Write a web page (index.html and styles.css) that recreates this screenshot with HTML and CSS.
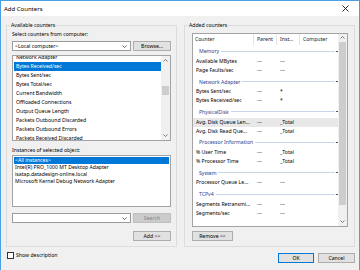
FILE: index.html
```html
<!DOCTYPE html>
<html lang="en">
<head>
    <meta charset="UTF-8">
    <meta name="viewport" content="width=device-width, initial-scale=1.0">
    <title>Add Counters</title>
    <link rel="stylesheet" href="styles.css">
</head>
<body>
    <div class="window">
        <div class="titlebar">
            <span class="title">Add Counters</span>
            <svg class="close" width="7" height="7" viewBox="0 0 7 7">
                <path d="M0.5 0.5L6.5 6.5M6.5 0.5L0.5 6.5" stroke="#111" stroke-width="0.9" fill="none"/>
            </svg>
        </div>

        <div class="dialog">
            <div class="panes">
                <!-- left side -->
                <div class="group group-left">
                    <div class="group-title">Available counters</div>
                    <div class="label">Select counters from computer:</div>
                    <div class="row row-top">
                        <div class="combo">
                            <span>&lt;Local computer&gt;</span>
                            <svg class="chevron" width="5" height="3" viewBox="0 0 5 3"><path d="M0.5 0.5L2.5 2.5L4.5 0.5" stroke="#444" stroke-width="0.8" fill="none"/></svg>
                        </div>
                        <button type="button" class="btn btn-side">Browse...</button>
                    </div>

                    <div class="listbox counters">
                        <div class="items">
                            <div class="item first">Network Adapter</div>
                            <div class="item selected">Bytes Received/sec</div>
                            <div class="item">Bytes Sent/sec</div>
                            <div class="item">Bytes Total/sec</div>
                            <div class="item">Current Bandwidth</div>
                            <div class="item">Offloaded Connections</div>
                            <div class="item">Output Queue Length</div>
                            <div class="item">Packets Outbound Discarded</div>
                            <div class="item">Packets Outbound Errors</div>
                            <div class="item">Packets Received Discarded</div>
                        </div>
                        <div class="scrollbar">
                            <div class="arrow"><svg width="5" height="3" viewBox="0 0 5 3"><path d="M0.5 2.5L2.5 0.5L4.5 2.5" stroke="#606060" stroke-width="0.8" fill="none"/></svg></div>
                            <div class="track"><div class="thumb thumb-small"></div></div>
                            <div class="arrow"><svg width="5" height="3" viewBox="0 0 5 3"><path d="M0.5 0.5L2.5 2.5L4.5 0.5" stroke="#606060" stroke-width="0.8" fill="none"/></svg></div>
                        </div>
                    </div>

                    <div class="label label-instances">Instances of selected object:</div>
                    <div class="listbox instances">
                        <div class="items">
                            <div class="inst selected">&lt;All instances&gt;</div>
                            <div class="inst">Intel(R) PRO_1000 MT Desktop Adapter</div>
                            <div class="inst">isatap.datadesign-online.local</div>
                            <div class="inst">Microsoft Kernel Debug Network Adapter</div>
                        </div>
                    </div>

                    <div class="row row-search">
                        <div class="combo">
                            <span></span>
                            <svg class="chevron" width="5" height="3" viewBox="0 0 5 3"><path d="M0.5 0.5L2.5 2.5L4.5 0.5" stroke="#444" stroke-width="0.8" fill="none"/></svg>
                        </div>
                        <button type="button" class="btn btn-side" disabled>Search</button>
                    </div>

                    <div class="row row-add">
                        <button type="button" class="btn btn-side">Add &gt;&gt;</button>
                    </div>
                </div>

                <!-- right side -->
                <div class="group group-right">
                    <div class="group-title">Added counters</div>
                    <div class="table">
                        <div class="table-main">
                            <div class="thead">
                                <div class="th">Counter</div>
                                <div class="th">Parent</div>
                                <div class="th">Inst...</div>
                                <div class="th th-last">Computer</div>
                            </div>

                            <div class="grouprow"><span>Memory</span><i class="rule"></i><i class="mark"></i></div>
                            <div class="tr"><span>Available MBytes</span><span>---</span><span>---</span><span></span></div>
                            <div class="tr"><span>Page Faults/sec</span><span>---</span><span>---</span><span></span></div>

                            <div class="grouprow"><span>Network Adapter</span><i class="rule"></i><i class="mark"></i></div>
                            <div class="tr"><span>Bytes Sent/sec</span><span>---</span><span>*</span><span></span></div>
                            <div class="tr"><span>Bytes Received/sec</span><span>---</span><span>*</span><span></span></div>

                            <div class="grouprow"><span>PhysicalDisk</span><i class="rule"></i><i class="mark"></i></div>
                            <div class="tr hot"><span>Avg. Disk Queue Len...</span><span>---</span><span>_Total</span><span></span></div>
                            <div class="tr"><span>Avg. Disk Read Que...</span><span>---</span><span>_Total</span><span></span></div>

                            <div class="grouprow"><span>Processor Information</span><i class="rule"></i><i class="mark"></i></div>
                            <div class="tr"><span>% User Time</span><span>---</span><span>_Total</span><span></span></div>
                            <div class="tr"><span>% Processor Time</span><span>---</span><span>_Total</span><span></span></div>

                            <div class="grouprow"><span>System</span><i class="rule"></i><i class="mark"></i></div>
                            <div class="tr"><span>Processor Queue Le...</span><span>---</span><span>---</span><span></span></div>

                            <div class="grouprow"><span>TCPv4</span><i class="rule"></i><i class="mark"></i></div>
                            <div class="tr"><span>Segments Retransmi...</span><span>---</span><span>---</span><span></span></div>
                            <div class="tr"><span>Segments/sec</span><span>---</span><span>---</span><span></span></div>
                        </div>
                        <div class="scrollbar">
                            <div class="arrow arrow-short"><svg width="5" height="3" viewBox="0 0 5 3"><path d="M0.5 2.5L2.5 0.5L4.5 2.5" stroke="#606060" stroke-width="0.8" fill="none"/></svg></div>
                            <div class="track"><div class="thumb thumb-big"></div></div>
                            <div class="arrow"><svg width="5" height="3" viewBox="0 0 5 3"><path d="M0.5 0.5L2.5 2.5L4.5 0.5" stroke="#606060" stroke-width="0.8" fill="none"/></svg></div>
                        </div>
                    </div>
                    <div class="row row-remove">
                        <button type="button" class="btn btn-remove">Remove &lt;&lt;</button>
                    </div>
                </div>
            </div>

            <div class="footer">
                <label class="check">
                    <span class="box"></span>
                    <span>Show description</span>
                </label>
                <div class="actions">
                    <button type="button" class="btn btn-ok">OK</button>
                    <button type="button" class="btn btn-cancel">Cancel</button>
                </div>
            </div>
        </div>
    </div>
</body>
</html>
```

FILE: styles.css
```css
* {
    box-sizing: border-box;
}

body {
    margin: 0;
    background-color: #f0f0f0;
    font-family: "Segoe UI", "Noto Sans", sans-serif;
    font-size: 5.15px;
    color: #000;
}

.window {
    width: 360px;
    height: 270px;
    border: 1px solid #4c9fe2;
    border-bottom: none;
    background-color: #f0f0f0;
    overflow: hidden;
}

.titlebar {
    height: 15px;
    background-color: #fff;
    display: flex;
    align-items: center;
    justify-content: space-between;
    padding: 0 10px 0 3px;
}

.title {
    font-size: 6px;
    line-height: 8px;
}

.dialog {
    padding: 9px 4px 0 5px;
}

.panes {
    display: flex;
    gap: 7px;
}

/* group boxes */
.group {
    width: 171px;
    height: 222px;
    border: 1px solid #dcdcdc;
}

.group-left {
    padding: 0 5px;
}

.group-right {
    padding: 0 6px 0 7px;
}

.group-title {
    display: table;
    margin-top: -5px;
    padding: 0 1px;
    line-height: 8px;
    background-color: #f0f0f0;
}

.group-left .group-title {
    margin-left: -2px;
}

.group-right .group-title {
    margin-left: -4px;
}

.label {
    margin-top: 1px;
    line-height: 8px;
}

.label-instances {
    margin-top: 5px;
}

.row {
    display: flex;
    justify-content: space-between;
}

.row-top {
    margin-top: 3px;
}

.row-search {
    margin-top: 6px;
}

.row-add {
    margin-top: 8px;
    justify-content: flex-end;
}

.row-remove {
    margin-top: 4px;
}

.combo {
    width: 119px;
    height: 10px;
    border: 1px solid #9c9c9c;
    background-color: #fff;
    display: flex;
    align-items: center;
    justify-content: space-between;
    padding: 0 2px 0 2px;
    line-height: 8px;
}

.chevron {
    margin-right: 1px;
}

/* buttons */
.btn {
    height: 10px;
    padding: 0;
    border: 1px solid #adadad;
    background-color: #e1e1e1;
    font: inherit;
    line-height: 8px;
    color: #000;
}

.btn-side {
    width: 38px;
}

.btn:disabled {
    background-color: #cccccc;
    border-color: #bfbfbf;
    color: #838383;
}

.btn-remove {
    width: 41px;
}

.btn-ok {
    width: 36px;
    border-color: #0078d7;
}

.btn-cancel {
    width: 37px;
}

/* list boxes */
.listbox {
    border: 1px solid #a3a3a3;
    background-color: #fff;
    display: flex;
}

.listbox .items {
    flex: 1;
    overflow: hidden;
}

.counters {
    margin-top: 4px;
    height: 86px;
}

.item {
    height: 9px;
    line-height: 9px;
    margin-left: 1px;
    padding-left: 2px;
    white-space: nowrap;
}

.item.first {
    margin-top: -3px;
}

.instances {
    margin-top: 1px;
    height: 52px;
}

.instances .items {
    padding-top: 1px;
}

.inst {
    height: 7px;
    line-height: 7px;
    margin: 0 1px;
    padding-left: 1px;
    white-space: nowrap;
}

.selected {
    background-color: #0078d7;
    color: #fff;
}

/* scrollbars */
.scrollbar {
    width: 9px;
    background-color: #f0f0f0;
    display: flex;
    flex-direction: column;
}

.arrow {
    height: 9px;
    display: flex;
    align-items: center;
    justify-content: center;
}

.arrow-short {
    height: 7px;
}

.track {
    flex: 1;
    padding: 0 1px;
}

.thumb {
    background-color: #cdcdcd;
}

.thumb-small {
    margin-top: 21px;
    height: 9px;
}

.thumb-big {
    margin-top: 1px;
    height: 163px;
}

/* added counters table */
.table {
    margin-top: 4px;
    height: 194px;
    border: 1px solid #a3a3a3;
    background-color: #fff;
    display: flex;
}

.table-main {
    flex: 1;
    overflow: hidden;
}

.thead,
.tr {
    display: grid;
    grid-template-columns: 61px 23px 23px 1fr;
}

.thead {
    height: 10.5px;
}

.th {
    padding-left: 3px;
    line-height: 10.5px;
    color: #1a1a1a;
    border-right: 1px solid #e5e5e5;
    white-space: nowrap;
}

.th:first-child {
    padding-left: 2px;
}

.th-last {
    border-right: none;
}

.tr {
    height: 9.2px;
    line-height: 9.2px;
}

.tr span {
    padding-left: 3px;
    white-space: nowrap;
}

.tr.hot {
    background-color: #e8e8e8;
}

.grouprow {
    height: 12.1px;
    padding: 1px 0 0 6px;
    display: flex;
    align-items: center;
    color: #2a3f94;
}

.grouprow .rule {
    flex: 1;
    height: 1px;
    margin-left: 2px;
    background-color: #c9d3ea;
}

.grouprow .mark {
    width: 2px;
    height: 1px;
    margin: 0 0 0 1px;
    background-color: #44507a;
}

/* footer */
.footer {
    margin-top: 5px;
    display: flex;
    justify-content: space-between;
    align-items: flex-start;
}

.check {
    display: flex;
    align-items: center;
    gap: 2px;
    margin-left: 1px;
    line-height: 7px;
}

.box {
    width: 7px;
    height: 7px;
    border: 1px solid #333;
    background-color: #fff;
}

.actions {
    display: flex;
    gap: 4px;
    margin-top: 1px;
}
```
